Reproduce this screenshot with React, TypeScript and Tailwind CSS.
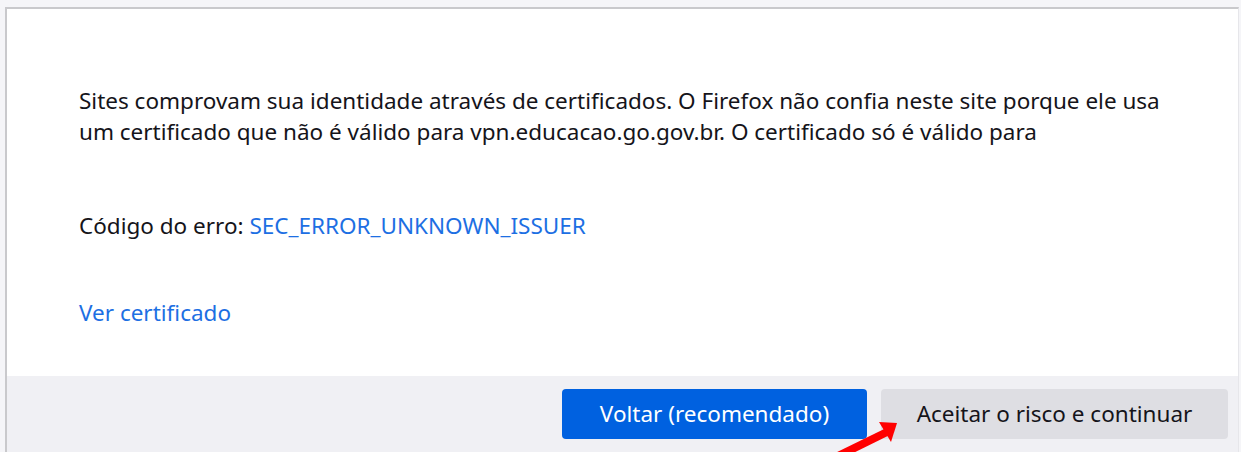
export default function App() {
  return (
    <div className="relative h-[452px] w-full overflow-hidden bg-[#f5f5f8] pt-[7px] pl-[5px] pr-[2px] font-['Noto_Sans',sans-serif] text-[#15141a]">
      <div className="flex h-full flex-col border-t-2 border-l-2 border-r border-t-[#c9c9cc] border-l-[#c9c9cc] border-r-[#e6e6ea] bg-white">
        <div className="flex-1 pl-[72px] pt-[76px] text-[22.5px] leading-[31px]">
          <p className="whitespace-nowrap">
            Sites comprovam sua identidade através de certificados. O Firefox não confia neste site porque ele usa
            <br />
            um certificado que não é válido para vpn.educacao.go.gov.br. O certificado só é válido para
          </p>
          <p className="mt-[63px]">
            Código do erro: <span className="text-[#1d6fe3]">SEC_ERROR_UNKNOWN_ISSUER</span>
          </p>
          <p className="mt-[56px] text-[#1d6fe3]">Ver certificado</p>
        </div>
        <div className="flex h-[76px] items-center justify-end gap-[14px] bg-[#f0f0f4] pr-[10px] text-[22.5px]">
          <button className="h-[50px] w-[305px] rounded-[4px] bg-[#0061e0] text-white">Voltar (recomendado)</button>
          <button className="h-[50px] w-[347px] rounded-[4px] bg-[#dedee3] text-[#15141a]">Aceitar o risco e continuar</button>
        </div>
      </div>
      {/* red pointer arrow */}
      <svg className="absolute left-[820px] top-[408px]" width="90" height="44" viewBox="0 0 90 44">
        <line x1="14" y1="50" x2="67" y2="24" stroke="#ff0000" strokeWidth="8" />
        <polygon points="77,15 59,14 71,34" fill="#ff0000" />
      </svg>
    </div>
  );
}
